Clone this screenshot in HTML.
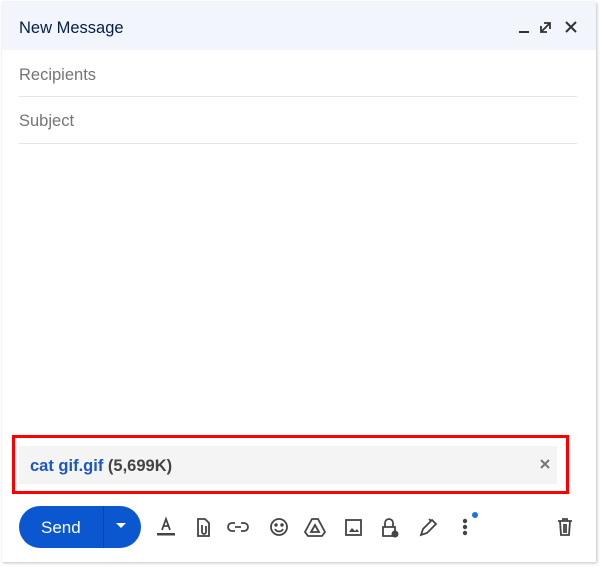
<!DOCTYPE html>
<html><head><style>
body{margin:0;width:600px;height:567px;background:#fff;font-family:"Liberation Sans",Arial,sans-serif;position:relative;overflow:hidden}
.panel{position:absolute;left:2px;top:2px;width:594px;height:560px;background:#fff;box-shadow:1px 1px 3px rgba(0,0,0,.25)}
.hdr{position:absolute;left:2px;top:2px;width:594px;height:48px;background:#f2f6fc}
.t{position:absolute;font-size:16.5px}
.line{position:absolute;left:19px;width:558px;height:1px;background:#e6e6e6}
.ic{position:absolute;top:516px}
</style></head><body>
<div class="panel"></div>
<div class="hdr"></div>
<div class="t" style="left:19px;top:19px;color:#041e49">New Message</div>
<svg style="position:absolute;left:515px;top:18px" width="70" height="20" viewBox="0 0 70 20">
<rect x="4" y="13" width="10" height="2" fill="#333"/>
<path d="M29 5h6v6M35 5l-9 9M26 8v6h6" stroke="#333" stroke-width="1.8" fill="none"/>
<path d="M51 4l10 10M61 4l-10 10" stroke="#333" stroke-width="2"/>
</svg>
<div class="t" style="left:19px;top:66px;color:#757575">Recipients</div>
<div class="line" style="top:96px"></div>
<div class="t" style="left:19px;top:112px;color:#757575">Subject</div>
<div class="line" style="top:143px"></div>
<div style="position:absolute;left:12px;top:435px;width:551px;height:53px;border:3px solid #f00"></div>
<div style="position:absolute;left:19px;top:446px;width:538px;height:38px;background:#f4f4f4"></div>
<div class="t" style="left:30px;top:457px;font-weight:bold;color:#1a56c4">cat gif.gif <span style="color:#444">(5,699K)</span></div>
<svg style="position:absolute;left:539px;top:458px" width="12" height="12"><path d="M2 2l8 8M10 2l-8 8" stroke="#777" stroke-width="2"/></svg>
<div style="position:absolute;left:19px;top:506px;width:122px;height:42px;border-radius:21px;background:#0b57d0"></div>
<div style="position:absolute;left:103px;top:506px;width:1px;height:42px;background:#0842a0"></div>
<div class="t" style="left:41px;top:518px;color:#fff;font-size:17px">Send</div>
<svg style="position:absolute;left:115px;top:522px" width="12" height="8"><path d="M1 1h10L6 6z" fill="#fff"/></svg>
<svg class="ic" style="left:155px" width="330" height="22" viewBox="0 0 330 22" fill="none" stroke="#444" stroke-width="1.8">
<path d="M7 14l4-11 4 11M8.5 10h5"/><rect x="2" y="17" width="18" height="2.5" fill="#444" stroke="none"/>
<path d="M43 3h7l4 4v13h-11z M47 9v7a2 2 0 0 0 4 0v-6"/>
<path d="M80 7h-3a4 4 0 0 0 0 8h3M86 7h3a4 4 0 0 1 0 8h-3M80 11h6"/>
<circle cx="124" cy="11" r="8"/><circle cx="121" cy="9" r=".8" fill="#444"/><circle cx="127" cy="9" r=".8" fill="#444"/><path d="M120 13a4.5 4.5 0 0 0 8 0"/>
<path d="M157 3h6l7 13-3 4h-14l-3-4z M160 9l-4 7h8z"/>
<rect x="191" y="4" width="15" height="15"/><path d="M194 16l3-4 3 3 2-2 2 3z" fill="#444" stroke="none"/>
<path d="M230 11V7a4 4 0 0 1 8 0v4M228 11h12v9h-12z"/><circle cx="240" cy="18" r="3.5" fill="#444" stroke="none"/>
<path d="M266 19l2-6 9-9 4 4-9 9z M276 5l-2-2"/>
<circle cx="310" cy="5" r="1.3" fill="#444"/><circle cx="310" cy="11" r="1.3" fill="#444"/><circle cx="310" cy="17" r="1.3" fill="#444"/>
</svg>
<div style="position:absolute;left:472px;top:512px;width:6px;height:6px;border-radius:50%;background:#1a73e8"></div>
<svg class="ic" style="left:555px" width="20" height="22" viewBox="0 0 20 22" fill="none" stroke="#444" stroke-width="1.8"><path d="M3 5h14M8 5V3h4v2M5 5l1 14h8l1-14M9 8v9M11 8v9"/></svg>
</body></html>
